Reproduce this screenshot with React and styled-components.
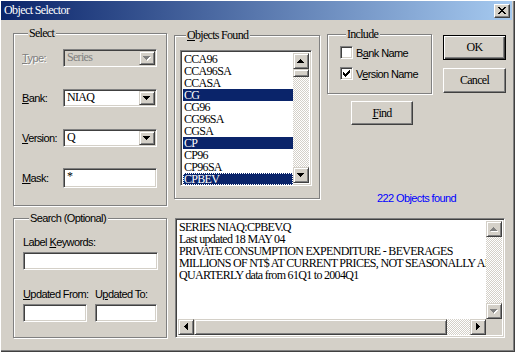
import React from 'react'
import styled, { createGlobalStyle, css } from 'styled-components'

const face = '#d4d0c8'
const navy = '#0a246a'
const sans = `"Liberation Sans", Arial, sans-serif`
const serif = `"Liberation Serif", "Times New Roman", serif`

const GlobalStyle = createGlobalStyle`
  html, body {
    margin: 0;
    padding: 0;
    background: ${face};
  }
  body {
    width: 515px;
    height: 352px;
    overflow: hidden;
  }
`

const sunken = css`
  box-sizing: border-box;
  border: 1px solid;
  border-color: #808080 #fff #fff #808080;
  box-shadow: inset 1px 1px 0 #404040, inset -1px -1px 0 ${face};
`

const raisedSmall = css`
  box-sizing: border-box;
  border: 1px solid;
  border-color: ${face} #404040 #404040 ${face};
  box-shadow: inset 1px 1px 0 #fff, inset -1px -1px 0 #808080;
  background: ${face};
`

const dithered = css`
  background: repeating-conic-gradient(#fff 0 25%, ${face} 0 50%) 0 0 / 2px 2px;
`

const serifText = css`
  font-family: ${serif};
  font-size: 12px;
  letter-spacing: -0.7px;
  white-space: nowrap;
`

const sansText = css`
  font-family: ${sans};
  font-size: 11px;
  letter-spacing: -0.6px;
  white-space: nowrap;
`

const paths = {
  down: 'M0 0h7v1H0zM1 1h5v1H1zM2 2h3v1H2zM3 3h1v1H3z',
  up: 'M3 0h1v1H3zM2 1h3v1H2zM1 2h5v1H1zM0 3h7v1H0z',
  left: 'M0 3h1v1H0zM1 2h1v3H1zM2 1h1v5H2zM3 0h1v7H3z',
  right: 'M0 0h1v7H0zM1 1h1v5H1zM2 2h1v3H2zM3 3h1v1H3z',
}

function Arrow({ dir, disabled }) {
  const wide = dir === 'up' || dir === 'down'
  const w = wide ? 7 : 4
  const h = wide ? 4 : 7
  return (
    <svg width={w + 1} height={h + 1} viewBox={`0 0 ${w + 1} ${h + 1}`} shapeRendering='crispEdges'>
      {disabled && <path d={paths[dir]} fill='#fff' transform='translate(1 1)' />}
      <path d={paths[dir]} fill={disabled ? '#808080' : '#000'} />
    </svg>
  )
}

const Window = styled.div`
  box-sizing: border-box;
  width: 515px;
  height: 352px;
  padding: 1px 3px 3px 1px;
  background: ${face};
  box-shadow: inset 1px 1px 0 #fff, inset -1px -1px 0 #404040, inset -2px -2px 0 #808080;
  display: flex;
  flex-direction: column;
`

const TitleBar = styled.div`
  height: 19px;
  display: flex;
  align-items: center;
  justify-content: space-between;
  padding: 0 2px 0 3px;
  background: linear-gradient(to right, ${navy}, #a6caf0);
`

const Title = styled.span`
  ${serifText};
  letter-spacing: -0.6px;
  color: #fff;
`

const CloseBox = styled.span`
  ${raisedSmall};
  border-color: #fff #404040 #404040 #fff;
  box-shadow: inset -1px -1px 0 #808080;
  width: 16px;
  height: 14px;
  display: flex;
  align-items: center;
  justify-content: center;
`

const Body = styled.div`
  flex: 1;
  display: grid;
  grid-template-columns: 154px 146px 179px;
  grid-template-rows: 179px 126px;
  column-gap: 7px;
  row-gap: 6px;
  padding: 7px 0 0 12px;
`

const Group = styled.fieldset`
  box-sizing: border-box;
  margin: ${p => p.$top || 0}px 0 0;
  padding: ${p => p.$pad};
  min-inline-size: 0;
  height: ${p => p.$height}px;
  width: ${p => (p.$width ? `${p.$width}px` : 'auto')};
  border: 1px solid #808080;
  box-shadow: inset 1px 1px 0 #fff, 1px 1px 0 #fff;
`

const Legend = styled.legend`
  ${p => (p.$sans ? sansText : serifText)};
  line-height: 12px;
  margin-left: 6px;
  padding: 0 2px 0 1px;
  background: ${face};
  color: #000;
`

const Key = styled.span`
  text-decoration: underline;
  text-underline-offset: 1px;
`

const FieldGrid = styled.div`
  display: grid;
  grid-template-columns: 41px 94px;
  grid-auto-rows: 18px;
  row-gap: 22px;
  align-items: center;
`

const Label = styled.span`
  ${sansText};
  color: ${p => (p.$disabled ? '#808080' : '#000')};
  text-shadow: ${p => (p.$disabled ? '1px 1px 0 #fff' : 'none')};
  line-height: 12px;
`

const Combo = styled.div`
  ${sunken};
  height: 18px;
  display: flex;
  background: ${p => (p.$disabled ? face : '#fff')};
`

const ComboText = styled.span`
  ${serifText};
  flex: 1;
  padding-left: 3px;
  line-height: 15px;
  color: ${p => (p.$disabled ? '#808080' : '#000')};
`

const DropButton = styled.span`
  ${raisedSmall};
  width: 16px;
  margin: 1px;
  display: flex;
  align-items: center;
  justify-content: center;
`

const Edit = styled.div`
  ${sunken};
  height: ${p => p.$h || 18}px;
  margin-top: ${p => p.$mt || 0}px;
  background: #fff;
  ${serifText};
  line-height: 15px;
  padding-left: 3px;
`

const ListBox = styled.div`
  ${sunken};
  width: 132px;
  height: 136px;
  padding: 2px;
  display: flex;
  background: #fff;
`

const Items = styled.div`
  flex: 1;
  display: flex;
  flex-direction: column;
`

const Item = styled.div`
  ${serifText};
  height: 12px;
  line-height: 12px;
  padding-left: 1px;
  box-sizing: border-box;
  color: ${p => (p.$selected ? '#fff' : '#000')};
  background: ${p => (p.$selected ? navy : 'transparent')};
  outline: ${p => (p.$focus ? '1px dotted #fff' : 'none')};
  outline-offset: -1px;
`

const VScroll = styled.div`
  width: 16px;
  display: flex;
  flex-direction: column;
  ${dithered};
`

const HScroll = styled.div`
  height: 16px;
  display: flex;
  ${dithered};
`

const ScrollButton = styled.span`
  ${raisedSmall};
  width: 16px;
  height: 16px;
  flex: none;
  display: flex;
  align-items: center;
  justify-content: center;
`

const Thumb = styled.span`
  ${raisedSmall};
  flex: none;
  width: ${p => p.$w || 16}px;
  height: ${p => p.$h || 16}px;
`

const Track = styled.span`
  flex: 1;
`

const RightPanel = styled.div`
  display: flex;
  flex-direction: column;
  align-items: flex-start;
`

const TopRow = styled.div`
  display: flex;
  align-items: flex-start;
  gap: 11px;
  margin-top: 1px;
`

const CheckList = styled.div`
  display: flex;
  flex-direction: column;
  gap: 8px;
`

const CheckRow = styled.div`
  display: flex;
  align-items: center;
  gap: 3px;
  height: 13px;
`

const CheckBox = styled.span`
  ${sunken};
  width: 13px;
  height: 13px;
  background: #fff;
  display: flex;
  align-items: center;
  justify-content: center;
`

const ButtonColumn = styled.div`
  display: flex;
  flex-direction: column;
  gap: 8px;
  margin-top: 7px;
`

const Button = styled.button`
  box-sizing: border-box;
  width: ${p => p.$w}px;
  height: ${p => p.$h || 25}px;
  margin: ${p => p.$margin || 0};
  padding: 0;
  ${serifText};
  color: #000;
  background: ${face};
  border: 1px solid;
  border-color: ${p => (p.$default ? '#000' : '#fff #404040 #404040 #fff')};
  box-shadow: ${p =>
    p.$default
      ? `inset 1px 1px 0 #fff, inset -1px -1px 0 #404040, inset -2px -2px 0 #808080`
      : `inset -1px -1px 0 #808080, inset 1px 1px 0 ${face}`};
`

const Count = styled.div`
  ${sansText};
  align-self: center;
  margin: auto 0 2px;
  line-height: 12px;
  color: #0000ff;
`

const SearchStack = styled.div`
  display: flex;
  flex-direction: column;
`

const SearchLabel = styled(Label)`
  height: 12px;
`

const DateGrid = styled.div`
  display: grid;
  grid-template-columns: 64px 62px;
  column-gap: 8px;
  row-gap: 4px;
  margin-top: 18px;
`

const InfoBox = styled.div`
  ${sunken};
  grid-column: 2 / 4;
  margin: 6px 1px 0 1px;
  height: 120px;
  padding: 2px;
  background: #fff;
  display: grid;
  grid-template-columns: 1fr 16px;
  grid-template-rows: 1fr 16px;
  min-width: 0;
`

const InfoText = styled.div`
  ${serifText};
  line-height: 12px;
  white-space: pre;
  overflow: hidden;
  padding: 0 0 0 1px;
`

const Corner = styled.span`
  background: ${face};
`

const objects = ['CCA96', 'CCA96SA', 'CCASA', 'CG', 'CG96', 'CG96SA', 'CGSA', 'CP', 'CP96', 'CP96SA', 'CPBEV']
const selected = ['CG', 'CP', 'CPBEV']

const info = [
  'SERIES NIAQ:CPBEV.Q',
  'Last updated 18 MAY 04',
  'PRIVATE CONSUMPTION EXPENDITURE - BEVERAGES',
  'MILLIONS OF NT$ AT CURRENT PRICES, NOT SEASONALLY ADJUSTED',
  'QUARTERLY data from 61Q1 to 2004Q1',
]

function ComboBox({ value, disabled }) {
  return (
    <Combo $disabled={disabled}>
      <ComboText $disabled={disabled}>{value}</ComboText>
      <DropButton>
        <Arrow dir='down' disabled={disabled} />
      </DropButton>
    </Combo>
  )
}

function CheckMark() {
  return (
    <svg width='7' height='7' viewBox='0 0 7 7' shapeRendering='crispEdges'>
      <path d='M6 0h1v1H6zM5 1h2v1H5zM0 2h1v1H0zM4 2h3v1H4zM0 3h2v1H0zM3 3h3v1H3zM0 4h5v1H0zM1 5h3v1H1zM2 6h1v1H2z' />
    </svg>
  )
}

export default function App() {
  return (
    <>
      <GlobalStyle />
      <Window>
        <TitleBar>
          <Title>Object Selector</Title>
          <CloseBox>
            <svg width='8' height='7' viewBox='0 0 8 7' shapeRendering='crispEdges'>
              <path d='M0 0h2v1H0zM6 0h2v1H6zM1 1h2v1H1zM5 1h2v1H5zM2 2h4v1H2zM3 3h2v1H3zM2 4h4v1H2zM1 5h2v1H1zM5 5h2v1H5zM0 6h2v1H0zM6 6h2v1H6z' />
            </svg>
          </CloseBox>
        </TitleBar>

        <Body>
          <Group $height={179} $pad='10px 8px 0 8px'>
            <Legend>Select</Legend>
            <FieldGrid>
              <Label $disabled>
                <Key>T</Key>ype:
              </Label>
              <ComboBox value='Series' disabled />
              <Label>
                <Key>B</Key>ank:
              </Label>
              <ComboBox value='NIAQ' />
              <Label>
                <Key>V</Key>ersion:
              </Label>
              <ComboBox value='Q' />
              <Label>
                <Key>M</Key>ask:
              </Label>
              <Edit $h={20}>*</Edit>
            </FieldGrid>
          </Group>

          <Group $top={2} $height={170} $pad='9px 5px 0 5px'>
            <Legend>
              <Key>O</Key>bjects Found
            </Legend>
            <ListBox>
              <Items>
                {objects.map(name => (
                  <Item key={name} $selected={selected.includes(name)} $focus={name === 'CPBEV'}>
                    {name}
                  </Item>
                ))}
              </Items>
              <VScroll>
                <ScrollButton>
                  <Arrow dir='up' />
                </ScrollButton>
                <Thumb $h={8} />
                <Track />
                <ScrollButton>
                  <Arrow dir='down' />
                </ScrollButton>
              </VScroll>
            </ListBox>
          </Group>

          <RightPanel>
            <TopRow>
              <Group $width={105} $height={66} $pad='6px 4px 0 12px'>
                <Legend>Include</Legend>
                <CheckList>
                  <CheckRow>
                    <CheckBox />
                    <Label>
                      B<Key>a</Key>nk Name
                    </Label>
                  </CheckRow>
                  <CheckRow>
                    <CheckBox>
                      <CheckMark />
                    </CheckBox>
                    <Label>
                      V<Key>e</Key>rsion Name
                    </Label>
                  </CheckRow>
                </CheckList>
              </Group>
              <ButtonColumn>
                <Button $w={63} $default>
                  OK
                </Button>
                <Button $w={63}>Cancel</Button>
              </ButtonColumn>
            </TopRow>
            <Button $w={62} $h={24} $margin='7px 0 0 24px'>
              <Key>F</Key>ind
            </Button>
            <Count>222 Objects found</Count>
          </RightPanel>

          <Group $height={126} $pad='12px 8px 0 9px'>
            <Legend $sans>Search (Optional)</Legend>
            <SearchStack>
              <SearchLabel>
                Label <Key>K</Key>eywords:
              </SearchLabel>
              <Edit $mt={4} />
              <DateGrid>
                <SearchLabel>
                  <Key>U</Key>pdated From:
                </SearchLabel>
                <SearchLabel>
                  U<Key>p</Key>dated To:
                </SearchLabel>
                <Edit />
                <Edit />
              </DateGrid>
            </SearchStack>
          </Group>

          <InfoBox>
            <InfoText>{info.join('\n')}</InfoText>
            <VScroll>
              <ScrollButton>
                <Arrow dir='up' disabled />
              </ScrollButton>
              <Track />
              <ScrollButton>
                <Arrow dir='down' disabled />
              </ScrollButton>
            </VScroll>
            <HScroll>
              <ScrollButton>
                <Arrow dir='left' />
              </ScrollButton>
              <Thumb $w={253} />
              <Track />
              <ScrollButton>
                <Arrow dir='right' />
              </ScrollButton>
            </HScroll>
            <Corner />
          </InfoBox>
        </Body>
      </Window>
    </>
  )
}
